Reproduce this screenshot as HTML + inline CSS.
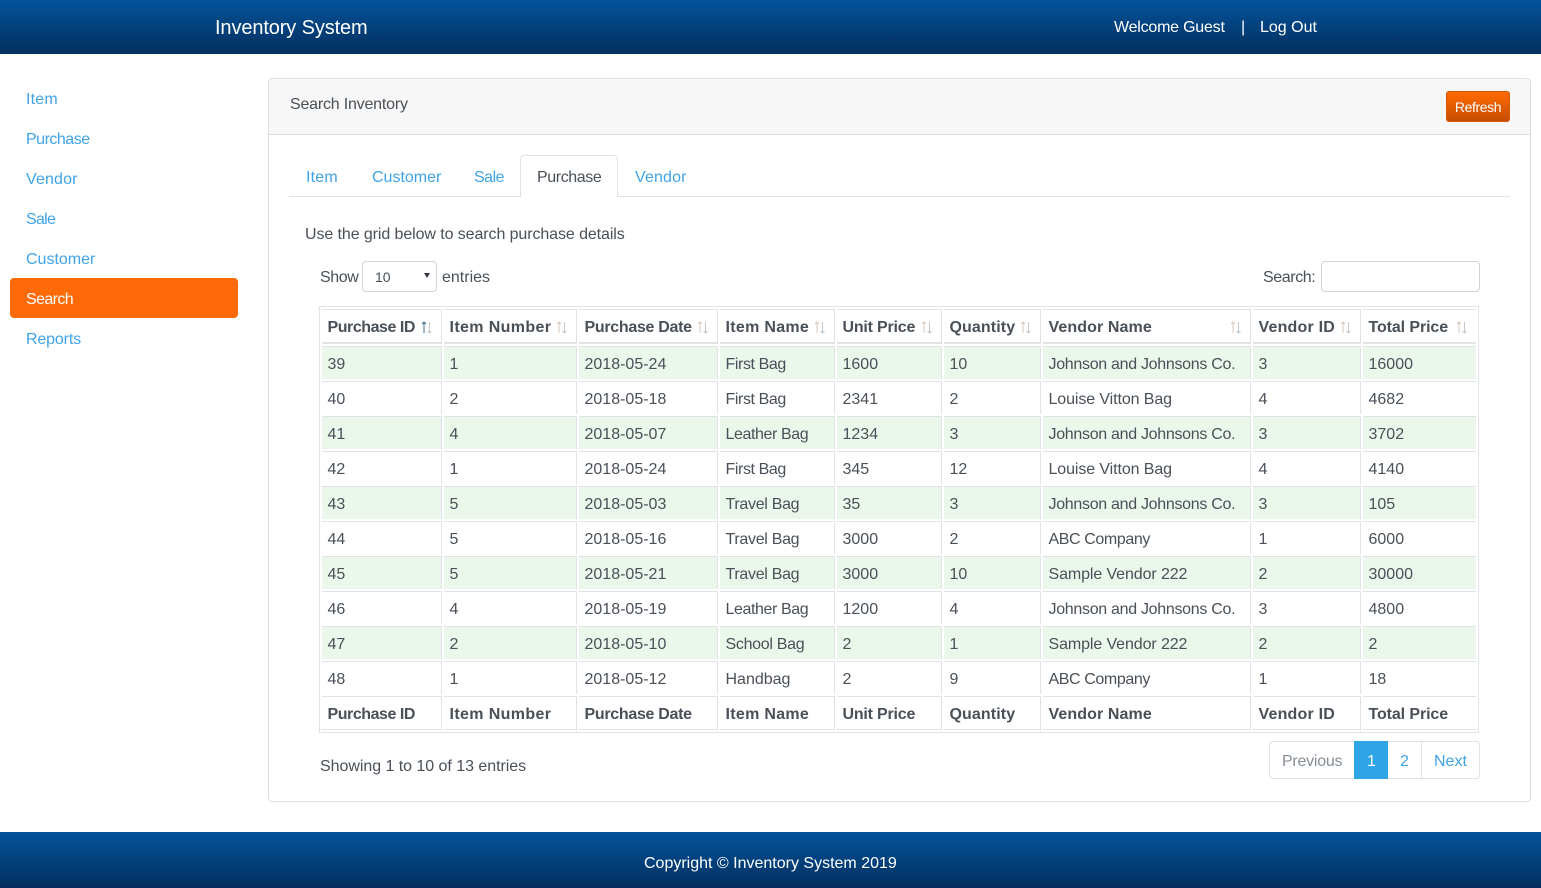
<!DOCTYPE html>
<html lang="en"><head><meta charset="utf-8"><title>Inventory System</title>
<style>
*{box-sizing:border-box}
html,body{margin:0;padding:0;width:1541px;height:888px;overflow:hidden;background:#fff}
body{font-family:"Liberation Sans",sans-serif;font-size:16px;color:#495057;position:relative}
.a{position:absolute;white-space:nowrap;line-height:20px}
.bar{position:absolute;left:0;width:1541px;background:linear-gradient(#03539b,#032f5e)}
.l{color:#3fa3e8}
.side{position:absolute;left:26px;line-height:20px;color:#3fa3e8}
table{position:absolute;left:319px;top:306px;width:1160px;table-layout:fixed;border-collapse:separate;border-spacing:2px;border:1px solid #dfe2e6}
td,th{padding:4px 0 0 5.5px;height:33px;border-top:1px solid #dfe2e6;border-right:1px solid #dfe2e6;text-align:left;white-space:nowrap;overflow:hidden;position:relative;line-height:20px}
th{font-weight:bold}
thead th{height:35px;border-bottom:2px solid #dfe2e6}
tfoot th{height:34px;border-bottom:1px solid #dfe2e6}
td:last-child,th:last-child{border-right:0}
tbody tr:nth-child(odd) td{background:#ecf7ec}
th svg{position:absolute;top:11px;right:9px}
.p{letter-spacing:-.45px}.i{letter-spacing:.37px}.d{letter-spacing:-.3px}.m{letter-spacing:.3px}.u{letter-spacing:-.2px}.q{letter-spacing:.1px}.v{letter-spacing:.2px}.t{letter-spacing:-.1px}
.j{letter-spacing:-.3px}.o{letter-spacing:-.1px}.c{letter-spacing:-.4px}.n{letter-spacing:-.4px}.s{letter-spacing:-.3px}
</style></head><body>
<div class="bar" style="top:0;height:54px"></div>
<div class="a" style="left:215px;top:18px;font-size:20px;letter-spacing:-.12px;color:#fff">Inventory System</div>
<div class="a" style="left:1114px;top:18px;color:#fff;letter-spacing:-.22px">Welcome Guest</div>
<div class="a" style="left:1241px;top:18px;color:#fff">|</div>
<div class="a" style="left:1260px;top:18px;color:#fff">Log Out</div>

<div class="side" style="top:90px;letter-spacing:.2px">Item</div>
<div class="side" style="top:130px;letter-spacing:-.5px">Purchase</div>
<div class="side" style="top:170px;letter-spacing:.15px">Vendor</div>
<div class="side" style="top:210px;letter-spacing:-.7px">Sale</div>
<div class="side" style="top:250px">Customer</div>
<div style="position:absolute;left:10px;top:278px;width:228px;height:40px;background:#ff6a08;border-radius:4px"></div>
<div class="side" style="top:290px;color:#fff;letter-spacing:-.6px">Search</div>
<div class="side" style="top:330px;letter-spacing:-.15px">Reports</div>

<div style="position:absolute;left:268px;top:78px;width:1263px;height:724px;border:1px solid #dfdfdf;border-radius:4px"></div>
<div style="position:absolute;left:269px;top:79px;width:1261px;height:56px;background:#f7f7f7;border-bottom:1px solid #dfdfdf;border-radius:4px 4px 0 0"></div>
<div class="a" style="left:290px;top:95px;letter-spacing:-.2px">Search Inventory</div>
<div style="position:absolute;left:1446px;top:91px;width:64px;height:31px;background:linear-gradient(#ff6a00,#c54e00);border:1px solid #d85a00;border-radius:3px;color:#fff;font-size:14px;letter-spacing:-.4px;line-height:30px;text-align:center">Refresh</div>

<div style="position:absolute;left:289px;top:196px;width:1221px;height:1px;background:#dfe2e6"></div>
<div style="position:absolute;left:520px;top:155px;width:98px;height:42px;background:#fff;border:1px solid #dfe2e6;border-bottom:0;border-radius:4px 4px 0 0"></div>
<div class="a l" style="left:306px;top:168px;letter-spacing:.2px">Item</div>
<div class="a l" style="left:372px;top:168px">Customer</div>
<div class="a l" style="left:474px;top:168px;letter-spacing:-.5px">Sale</div>
<div class="a" style="left:537px;top:168px;letter-spacing:-.4px">Purchase</div>
<div class="a l" style="left:635px;top:168px;letter-spacing:.15px">Vendor</div>

<div class="a" style="left:305px;top:225px;letter-spacing:-.09px">Use the grid below to search purchase details</div>
<div class="a" style="left:320px;top:268px;letter-spacing:-.4px">Show</div>
<div style="position:absolute;left:362px;top:261px;width:75px;height:31px;border:1px solid #ced4da;border-radius:4px"></div>
<div class="a" style="left:375px;top:267px;font-size:14px">10</div>
<svg style="position:absolute;left:424px;top:273px" width="6" height="6"><path d="M0 0H6L3 5Z" fill="#343a40"/></svg>
<div class="a" style="left:442px;top:268px">entries</div>
<div class="a" style="left:1263px;top:268px;letter-spacing:-.4px">Search:</div>
<div style="position:absolute;left:1321px;top:261px;width:159px;height:31px;border:1px solid #ced4da;border-radius:4px"></div>

<table>
<colgroup><col style="width:120px"><col style="width:133px"><col style="width:139px"><col style="width:115px"><col style="width:105px"><col style="width:97px"><col style="width:208px"><col style="width:108px"><col style="width:113px"></colgroup>
<thead><tr>
<th class="p">Purchase ID<svg width="12" height="13" fill="none" stroke-width="1"><path d="M4 12V1M2 3L4 1L6 3" stroke="#3a6a8c"/><path d="M9.5 1V12M7.5 10L9.5 12L11.5 10" stroke="#c4c8cc"/></svg></th>
<th class="i">Item Number<svg width="12" height="13" fill="none" stroke-width="1"><path d="M4 12V1M2 3L4 1L6 3" stroke="#d8c8b8"/><path d="M9.5 1V12M7.5 10L9.5 12L11.5 10" stroke="#c4c8cc"/></svg></th>
<th class="d">Purchase Date<svg width="12" height="13" fill="none" stroke-width="1"><path d="M4 12V1M2 3L4 1L6 3" stroke="#d8c8b8"/><path d="M9.5 1V12M7.5 10L9.5 12L11.5 10" stroke="#c4c8cc"/></svg></th>
<th class="m">Item Name<svg width="12" height="13" fill="none" stroke-width="1"><path d="M4 12V1M2 3L4 1L6 3" stroke="#d8c8b8"/><path d="M9.5 1V12M7.5 10L9.5 12L11.5 10" stroke="#c4c8cc"/></svg></th>
<th class="u">Unit Price<svg width="12" height="13" fill="none" stroke-width="1"><path d="M4 12V1M2 3L4 1L6 3" stroke="#d8c8b8"/><path d="M9.5 1V12M7.5 10L9.5 12L11.5 10" stroke="#c4c8cc"/></svg></th>
<th class="q">Quantity<svg width="12" height="13" fill="none" stroke-width="1"><path d="M4 12V1M2 3L4 1L6 3" stroke="#d8c8b8"/><path d="M9.5 1V12M7.5 10L9.5 12L11.5 10" stroke="#c4c8cc"/></svg></th>
<th class="q">Vendor Name<svg width="12" height="13" fill="none" stroke-width="1"><path d="M4 12V1M2 3L4 1L6 3" stroke="#d8c8b8"/><path d="M9.5 1V12M7.5 10L9.5 12L11.5 10" stroke="#c4c8cc"/></svg></th>
<th class="v">Vendor ID<svg width="12" height="13" fill="none" stroke-width="1"><path d="M4 12V1M2 3L4 1L6 3" stroke="#d8c8b8"/><path d="M9.5 1V12M7.5 10L9.5 12L11.5 10" stroke="#c4c8cc"/></svg></th>
<th class="t">Total Price<svg width="12" height="13" fill="none" stroke-width="1"><path d="M4 12V1M2 3L4 1L6 3" stroke="#d8c8b8"/><path d="M9.5 1V12M7.5 10L9.5 12L11.5 10" stroke="#c4c8cc"/></svg></th>
</tr></thead>
<tbody>
<tr><td>39</td><td>1</td><td>2018-05-24</td><td class="n">First Bag</td><td>1600</td><td>10</td><td class="j">Johnson and Johnsons Co.</td><td>3</td><td>16000</td></tr>
<tr><td>40</td><td>2</td><td>2018-05-18</td><td class="n">First Bag</td><td>2341</td><td>2</td><td class="o">Louise Vitton Bag</td><td>4</td><td>4682</td></tr>
<tr><td>41</td><td>4</td><td>2018-05-07</td><td class="n">Leather Bag</td><td>1234</td><td>3</td><td class="j">Johnson and Johnsons Co.</td><td>3</td><td>3702</td></tr>
<tr><td>42</td><td>1</td><td>2018-05-24</td><td class="n">First Bag</td><td>345</td><td>12</td><td class="o">Louise Vitton Bag</td><td>4</td><td>4140</td></tr>
<tr><td>43</td><td>5</td><td>2018-05-03</td><td class="s">Travel Bag</td><td>35</td><td>3</td><td class="j">Johnson and Johnsons Co.</td><td>3</td><td>105</td></tr>
<tr><td>44</td><td>5</td><td>2018-05-16</td><td class="s">Travel Bag</td><td>3000</td><td>2</td><td class="c">ABC Company</td><td>1</td><td>6000</td></tr>
<tr><td>45</td><td>5</td><td>2018-05-21</td><td class="s">Travel Bag</td><td>3000</td><td>10</td><td class="o">Sample Vendor 222</td><td>2</td><td>30000</td></tr>
<tr><td>46</td><td>4</td><td>2018-05-19</td><td class="n">Leather Bag</td><td>1200</td><td>4</td><td class="j">Johnson and Johnsons Co.</td><td>3</td><td>4800</td></tr>
<tr><td>47</td><td>2</td><td>2018-05-10</td><td class="s">School Bag</td><td>2</td><td>1</td><td class="o">Sample Vendor 222</td><td>2</td><td>2</td></tr>
<tr><td>48</td><td>1</td><td>2018-05-12</td><td>Handbag</td><td>2</td><td>9</td><td class="c">ABC Company</td><td>1</td><td>18</td></tr>
</tbody>
<tfoot><tr><th class="p">Purchase ID</th><th class="i">Item Number</th><th class="d">Purchase Date</th><th class="m">Item Name</th><th class="u">Unit Price</th><th class="q">Quantity</th><th class="q">Vendor Name</th><th class="v">Vendor ID</th><th class="t">Total Price</th></tr></tfoot>
</table>

<div class="a" style="left:320px;top:757px;letter-spacing:-.04px">Showing 1 to 10 of 13 entries</div>
<div style="position:absolute;left:1269px;top:741px;width:211px;height:38px;border:1px solid #dfe2e6;border-radius:4px"></div>
<div style="position:absolute;left:1354px;top:741px;width:34px;height:38px;background:#2fa4e7"></div>
<div style="position:absolute;left:1421px;top:741px;width:1px;height:38px;background:#dfe2e6"></div>
<div class="a" style="left:1282px;top:752px;color:#868e96;letter-spacing:-.25px">Previous</div>
<div class="a" style="left:1367px;top:752px;color:#fff">1</div>
<div class="a l" style="left:1400px;top:752px">2</div>
<div class="a l" style="left:1434px;top:752px">Next</div>

<div class="bar" style="top:832px;height:56px"></div>
<div class="a" style="left:644px;top:854px;color:#fff">Copyright © Inventory System 2019</div>
</body></html>
